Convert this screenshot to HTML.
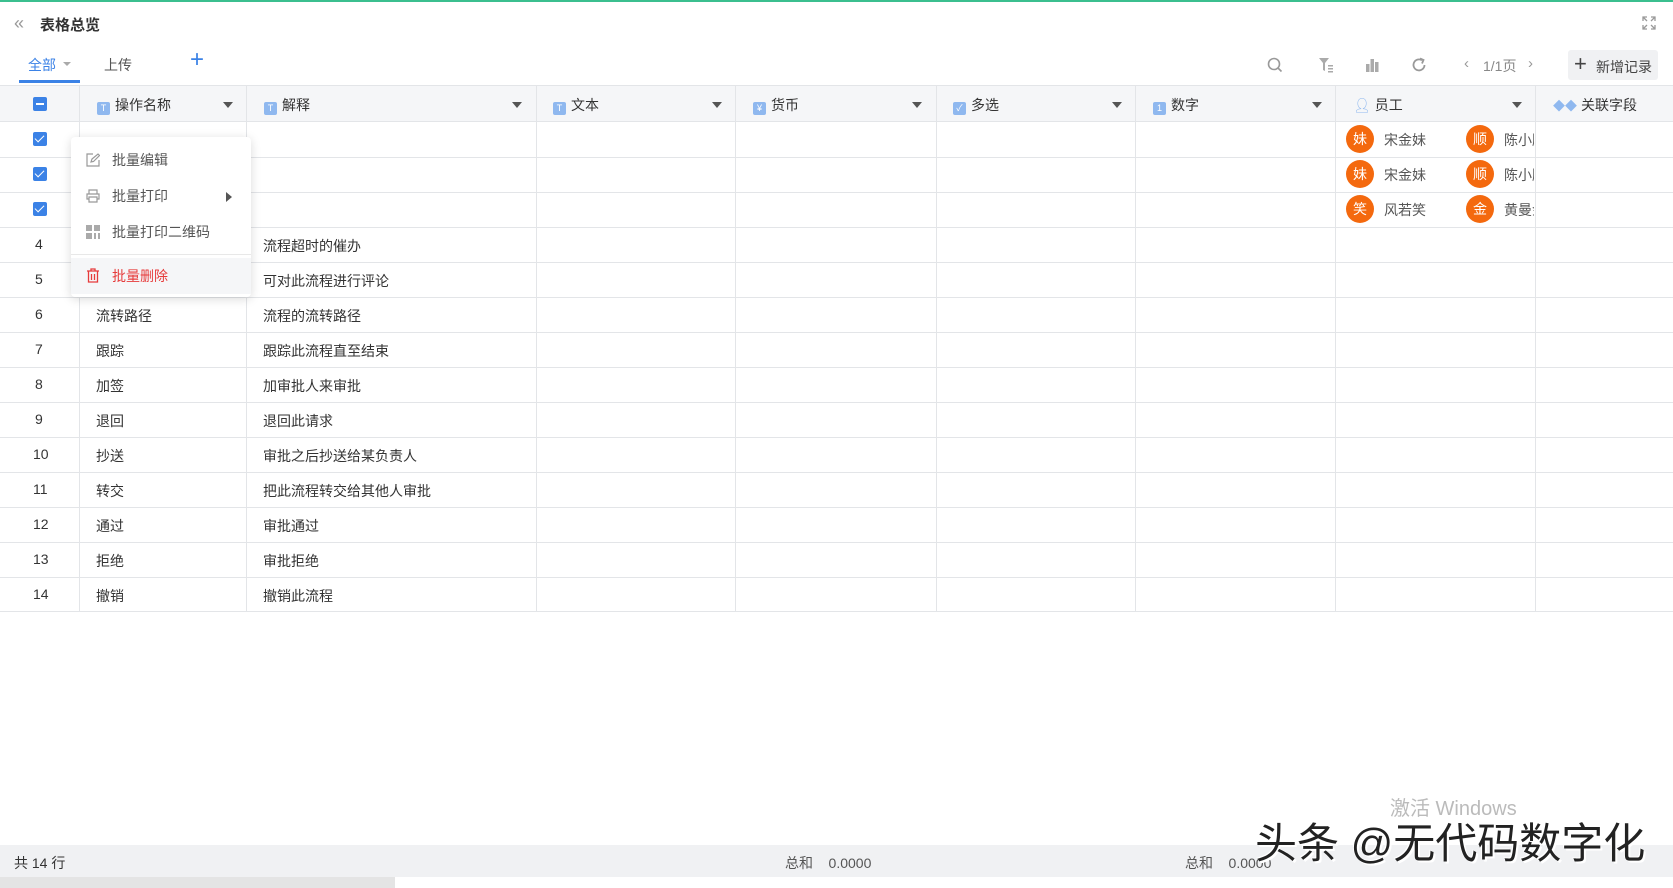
<!DOCTYPE html>
<html><head><meta charset="utf-8"><style>
*{margin:0;padding:0;box-sizing:border-box}
body{width:1673px;height:888px;overflow:hidden;background:#fff;font-family:"Liberation Sans","Noto Sans CJK SC",sans-serif;font-size:14px;color:#333;position:relative}
.a{position:absolute;white-space:nowrap}
.hd{position:absolute;top:85px;left:0;width:1673px;height:37px;background:#f5f6f8;border-top:1px solid #e3e5e8;border-bottom:1px solid #e3e5e8}
.vl{position:absolute;top:85px;width:1px;height:526px;background:#e3e5e8}
.hl{position:absolute;left:0;width:1673px;height:1px;background:#e3e5e8}
.ti{display:inline-block;width:13px;height:13px;border-radius:2px;background:#8fb8ef;color:#fff;font-size:9px;line-height:13px;text-align:center;vertical-align:-1px;margin-right:5px}
.dd{position:absolute;width:0;height:0;border-left:5px solid transparent;border-right:5px solid transparent;border-top:6px solid #555}
.cb{position:absolute;left:33px;width:14px;height:14px;background:#3b82e6;border-radius:2px}
.cb:after{content:"";position:absolute;left:4px;top:1px;width:4px;height:8px;border:solid #fff;border-width:0 1.5px 1.5px 0;transform:rotate(45deg)}
.av{position:absolute;width:28px;height:28px;border-radius:50%;background:#f4690e;color:#fff;font-size:14px;line-height:28px;text-align:center}
.nm{position:absolute;color:#555;font-size:14px;white-space:nowrap}
.mi{position:absolute;left:71px;width:180px;height:36px;line-height:36px;padding-left:41px;color:#555}
</style></head><body>
<div class="a" style="left:0;top:0;width:1673px;height:2px;background:#3bbf8f"></div>
<div class="a" style="left:14px;top:13px;color:#999;font-size:18px">«</div>
<div class="a" style="left:40px;top:14px;font-size:15px;font-weight:bold;color:#333">表格总览</div>
<svg class="a" style="left:1642px;top:16px" width="14" height="14" viewBox="0 0 14 14" fill="none" stroke="#999" stroke-width="1.3"><path d="M1 5V1h4M1 1l4 4M13 5V1H9M13 1L9 5M1 9v4h4M1 13l4-4M13 9v4H9M13 13l-4-4"/></svg>
<div class="a" style="left:28px;top:55px;color:#3b82e6;font-size:14px">全部</div>
<div class="a" style="left:63px;top:62px;border-left:4px solid transparent;border-right:4px solid transparent;border-top:4px solid #aaa"></div>
<div class="a" style="left:19px;top:80px;width:61px;height:3px;background:#3b82e6"></div>
<div class="a" style="left:104px;top:55px;color:#555">上传</div>
<div class="a" style="left:190px;top:48px;color:#3b82e6;font-size:24px;line-height:24px">+</div>
<svg class="a" style="left:1267px;top:57px" width="16" height="16" viewBox="0 0 16 16" fill="none" stroke="#999" stroke-width="1.6"><circle cx="7" cy="7" r="5.5"/><path d="M11 11l3.5 3.5"/></svg>
<svg class="a" style="left:1318px;top:57px" width="16" height="16" viewBox="0 0 16 16" fill="#aaa"><path d="M1 1h10l-4 5v8l-2-1V6z"/><rect x="10" y="8" width="5" height="1.5"/><rect x="10" y="11" width="5" height="1.5"/><rect x="10" y="14" width="5" height="1.5"/></svg>
<svg class="a" style="left:1365px;top:58px" width="15" height="14" viewBox="0 0 15 14" fill="#aaa"><rect x="1" y="6" width="3.5" height="8"/><rect x="5.5" y="1" width="3.5" height="13"/><rect x="10" y="4" width="3.5" height="10"/></svg>
<svg class="a" style="left:1411px;top:57px" width="16" height="16" viewBox="0 0 16 16" fill="none" stroke="#999" stroke-width="1.8"><path d="M13.5 8A5.5 5.5 0 1 1 11 3.3"/><path d="M9 1.5l3.5 1.5-1.5 3.5" fill="none"/></svg>
<div class="a" style="left:1464px;top:55px;color:#999;font-size:15px">‹</div>
<div class="a" style="left:1483px;top:56px;color:#888;font-size:14px">1/1页</div>
<div class="a" style="left:1528px;top:55px;color:#999;font-size:15px">›</div>
<div class="a" style="left:1568px;top:50px;width:90px;height:30px;background:#f0f1f3;border-radius:3px"></div>
<div class="a" style="left:1574px;top:51px;font-size:22px;color:#444;line-height:26px">+</div>
<div class="a" style="left:1596px;top:57px;color:#444">新增记录</div>

<div class="hd"></div>
<div class="a" style="left:33px;top:97px;width:14px;height:14px;background:#3b82e6;border-radius:2px"><div style="position:absolute;left:3px;top:6px;width:8px;height:2px;background:#fff"></div></div>
<div class="a" style="left:97px;top:95px"><span class="ti">T</span>操作名称</div><div class="dd" style="left:223px;top:102px"></div>
<div class="a" style="left:264px;top:95px"><span class="ti">T</span>解释</div><div class="dd" style="left:512px;top:102px"></div>
<div class="a" style="left:553px;top:95px"><span class="ti">T</span>文本</div><div class="dd" style="left:712px;top:102px"></div>
<div class="a" style="left:753px;top:95px"><span class="ti">¥</span>货币</div><div class="dd" style="left:912px;top:102px"></div>
<div class="a" style="left:953px;top:95px"><span class="ti">✓</span>多选</div><div class="dd" style="left:1112px;top:102px"></div>
<div class="a" style="left:1153px;top:95px"><span class="ti">1</span>数字</div><div class="dd" style="left:1312px;top:102px"></div>
<div class="a" style="left:1353px;top:95px"><span style="color:#8fb8ef;margin-right:4px">👤︎</span>员工</div><div class="dd" style="left:1512px;top:102px"></div>
<div class="a" style="left:1553px;top:95px"><span style="color:#8fb8ef;margin-right:4px;font-size:12px">◆◆</span>关联字段</div>

<div class="vl" style="left:79px"></div><div class="vl" style="left:246px"></div><div class="vl" style="left:536px"></div><div class="vl" style="left:735px"></div><div class="vl" style="left:936px"></div><div class="vl" style="left:1135px"></div><div class="vl" style="left:1335px"></div><div class="vl" style="left:1535px"></div>

<div class="hl" style="top:157px"></div><div class="hl" style="top:192px"></div><div class="hl" style="top:227px"></div><div class="hl" style="top:262px"></div><div class="hl" style="top:297px"></div><div class="hl" style="top:332px"></div><div class="hl" style="top:367px"></div><div class="hl" style="top:402px"></div><div class="hl" style="top:437px"></div><div class="hl" style="top:472px"></div><div class="hl" style="top:507px"></div><div class="hl" style="top:542px"></div><div class="hl" style="top:577px"></div><div class="hl" style="top:611px"></div>

<div class="cb" style="top:132px"></div><div class="cb" style="top:167px"></div><div class="cb" style="top:202px"></div>

<div class="av" style="left:1346px;top:125px">妹</div><div class="nm" style="left:1384px;top:130px">宋金妹</div>
<div class="av" style="left:1466px;top:125px">顺</div><div class="nm" style="left:1504px;top:130px;width:30px;overflow:hidden">陈小顺</div>
<div class="av" style="left:1346px;top:160px">妹</div><div class="nm" style="left:1384px;top:165px">宋金妹</div>
<div class="av" style="left:1466px;top:160px">顺</div><div class="nm" style="left:1504px;top:165px;width:30px;overflow:hidden">陈小顺</div>
<div class="av" style="left:1346px;top:195px">笑</div><div class="nm" style="left:1384px;top:200px">风若笑</div>
<div class="av" style="left:1466px;top:195px">金</div><div class="nm" style="left:1504px;top:200px;width:30px;overflow:hidden">黄曼金</div>

<div class="a" style="left:35px;top:236px">4</div><div class="a" style="left:263px;top:236px">流程超时的催办</div>
<div class="a" style="left:35px;top:271px">5</div><div class="a" style="left:263px;top:271px">可对此流程进行评论</div>
<div class="a" style="left:35px;top:306px">6</div><div class="a" style="left:96px;top:306px">流转路径</div><div class="a" style="left:263px;top:306px">流程的流转路径</div>
<div class="a" style="left:35px;top:341px">7</div><div class="a" style="left:96px;top:341px">跟踪</div><div class="a" style="left:263px;top:341px">跟踪此流程直至结束</div>
<div class="a" style="left:35px;top:376px">8</div><div class="a" style="left:96px;top:376px">加签</div><div class="a" style="left:263px;top:376px">加审批人来审批</div>
<div class="a" style="left:35px;top:411px">9</div><div class="a" style="left:96px;top:411px">退回</div><div class="a" style="left:263px;top:411px">退回此请求</div>
<div class="a" style="left:33px;top:446px">10</div><div class="a" style="left:96px;top:446px">抄送</div><div class="a" style="left:263px;top:446px">审批之后抄送给某负责人</div>
<div class="a" style="left:33px;top:481px">11</div><div class="a" style="left:96px;top:481px">转交</div><div class="a" style="left:263px;top:481px">把此流程转交给其他人审批</div>
<div class="a" style="left:33px;top:516px">12</div><div class="a" style="left:96px;top:516px">通过</div><div class="a" style="left:263px;top:516px">审批通过</div>
<div class="a" style="left:33px;top:551px">13</div><div class="a" style="left:96px;top:551px">拒绝</div><div class="a" style="left:263px;top:551px">审批拒绝</div>
<div class="a" style="left:33px;top:586px">14</div><div class="a" style="left:96px;top:586px">撤销</div><div class="a" style="left:263px;top:586px">撤销此流程</div>

<div class="a" style="left:71px;top:137px;width:180px;height:160px;background:#fff;border-radius:4px;box-shadow:0 2px 10px rgba(0,0,0,.15)"></div>
<div class="mi" style="top:142px">批量编辑</div>
<svg class="a" style="left:86px;top:153px" width="14" height="14" viewBox="0 0 14 14" fill="none" stroke="#999" stroke-width="1.2"><path d="M7 1H1v12h12V7"/><path d="M5 9l1-3 6-5 1.5 1.5-6 6z"/></svg>
<div class="mi" style="top:178px">批量打印</div>
<svg class="a" style="left:86px;top:189px" width="14" height="14" viewBox="0 0 14 14" fill="none" stroke="#999" stroke-width="1.2"><path d="M3 5V1h8v4M3 10H1V5h12v5h-2M3 8h8v5H3z"/></svg>
<div class="a" style="left:226px;top:192px;border-top:5px solid transparent;border-bottom:5px solid transparent;border-left:6px solid #555"></div>
<div class="mi" style="top:214px">批量打印二维码</div>
<svg class="a" style="left:86px;top:225px" width="14" height="14" viewBox="0 0 14 14" fill="#aaa"><rect x="0" y="0" width="6" height="6"/><rect x="8" y="0" width="6" height="6"/><rect x="0" y="8" width="6" height="6"/><rect x="8" y="8" width="2" height="6"/><rect x="12" y="8" width="2" height="6"/></svg>
<div class="a" style="left:71px;top:254px;width:180px;height:1px;background:#e8e8e8"></div>
<div class="a" style="left:71px;top:258px;width:180px;height:36px;background:#f5f6f8"></div>
<div class="mi" style="top:258px;color:#e63b3b">批量删除</div>
<svg class="a" style="left:86px;top:268px" width="14" height="15" viewBox="0 0 14 15" fill="none" stroke="#e63b3b" stroke-width="1.3"><path d="M1 3h12M5 3V1h4v2M2.5 3v11h9V3M5.5 6v6M8.5 6v6"/></svg>

<div class="a" style="left:1390px;top:792px;color:#bbb;font-size:20px">激活 Windows</div>
<div class="a" style="left:0;top:845px;width:1673px;height:32px;background:#f0f1f3"></div>
<div class="a" style="left:14px;top:853px;font-size:14px;color:#333">共 14 行</div>
<div class="a" style="left:785px;top:853px;font-size:14px;color:#555">总和&nbsp;&nbsp;&nbsp;&nbsp;0.0000</div>
<div class="a" style="left:1185px;top:853px;font-size:14px;color:#555">总和&nbsp;&nbsp;&nbsp;&nbsp;0.0000</div>
<div class="a" style="left:0;top:877px;width:395px;height:11px;background:#e4e4e4"></div>
<div class="a" style="left:1255px;top:810px;font-size:42px;color:#222;text-shadow:2px 2px 0 #fff,-1px -1px 0 #fff">头条 @无代码数字化</div>
</body></html>
